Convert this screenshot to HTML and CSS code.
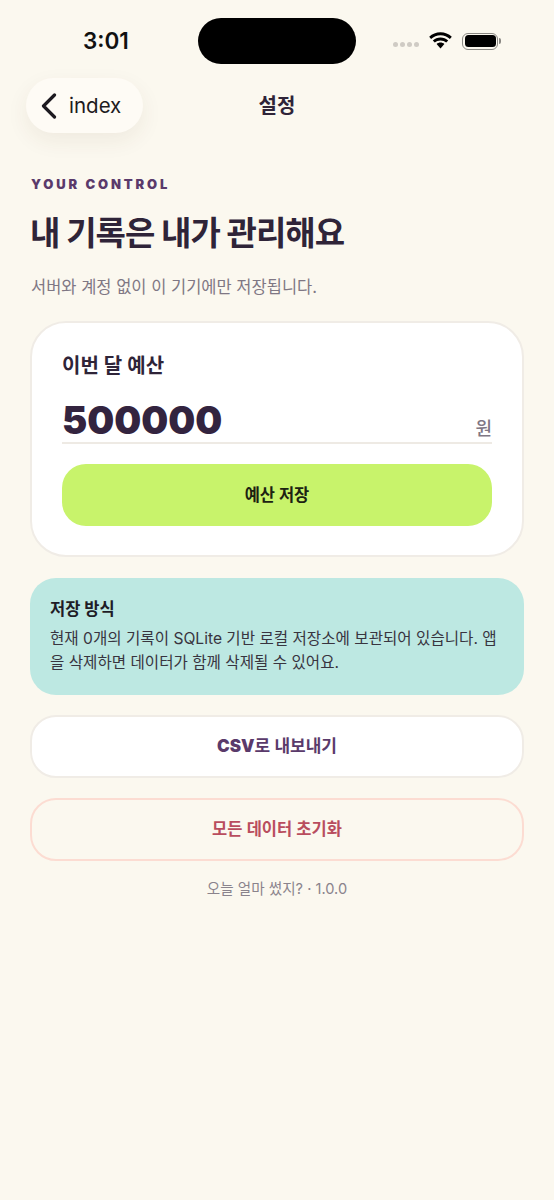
FILE: index.html
```html
<!DOCTYPE html>
<html lang="ko">
<head>
<meta charset="utf-8">
<title>설정</title>
<link rel="stylesheet" href="styles.css">
</head>
<body>
<div class="screen">
  <div class="status">
    <span class="time">3:01</span>
    <div class="island"></div>
    <div class="status-right">
      <div class="dots"><i></i><i></i><i></i><i></i></div>
      <svg class="wifi" width="25" height="18" viewBox="0 0 25 18"><path d="M12.5 3.2c3.6 0 6.900 1.400 9.400 3.700l1.900-2.100C20.800 2 16.800.3 12.500.3S4.200 2 1.200 4.800l1.900 2.100c2.500-2.300 5.800-3.700 9.400-3.700z"/><path d="M12.500 8.400c2.200 0 4.200.8 5.700 2.200l2-2.200c-2.100-1.900-4.800-3-7.700-3s-5.600 1.100-7.700 3l2 2.200c1.500-1.400 3.500-2.200 5.700-2.200z"/><path d="M12.500 10.600c-1.500 0-2.800.5-3.900 1.500l3.900 4.400 3.900-4.400c-1.100-1-2.400-1.500-3.900-1.500z"/></svg>
      <div class="battery"><div class="battery-fill"></div></div>
      <div class="battery-cap"></div>
    </div>
  </div>
  <header class="nav">
    <button class="back">
      <svg width="16" height="26" viewBox="0 0 16 26"><path d="M13.500 2 2.500 13l11 11" fill="none" stroke="#1d1a20" stroke-width="3.200" stroke-linecap="round" stroke-linejoin="round"/></svg>
      <span>index</span>
    </button>
    <h2 class="nav-title">설정</h2>
  </header>
  <main class="content">
    <p class="eyebrow">YOUR CONTROL</p>
    <h1 class="headline">내 기록은 내가 관리해요</h1>
    <p class="sub">서버와 계정 없이 이 기기에만 저장됩니다.</p>
    <section class="card">
      <div class="card-label">이번 달 예산</div>
      <div class="field"><span class="amount">500000</span><span class="unit">원</span></div>
      <button class="save">예산 저장</button>
    </section>
    <section class="info">
      <div class="info-title">저장 방식</div>
      <p class="info-text">현재 0개의 기록이 SQLite 기반 로컬 저장소에 보관되어 있습니다. 앱을 삭제하면 데이터가 함께 삭제될 수 있어요.</p>
    </section>
    <button class="action export"><b>CSV</b>로 내보내기</button>
    <button class="action reset">모든 데이터 초기화</button>
    <p class="foot">오늘 얼마 썼지? · 1.0.0</p>
  </main>
</div>
</body>
</html>
```
FILE: styles.css
```css
* { box-sizing: border-box; margin: 0; padding: 0; }
html, body { width: 554px; height: 1200px; overflow: hidden; }
body { background: #fbf8ef; font-family: Inter, "Noto Sans CJK KR", sans-serif; color: #2f2438; }
button { font-family: inherit; border: 0; background: none; display: block; }
.screen { position: relative; height: 1200px; }

.status { height: 78px; position: relative; }
.time { position: absolute; left: 83px; top: 27px; font-size: 22.500px; line-height: 28px; font-weight: 600; color: #111; }
.island { position: absolute; left: 198px; top: 18px; width: 158px; height: 46px; border-radius: 23px; background: #000; }
.status-right { position: absolute; left: 393px; top: 31px; height: 20px; display: flex; align-items: center; }
.dots { display: flex; gap: 2px; margin-top: 6px; }
.dots i { width: 5px; height: 5px; border-radius: 50%; background: #cfcbc4; display: block; }
.wifi { margin-left: 9px; margin-top: -1px; fill: #000; }
.battery { margin-left: 9px; width: 36px; height: 17px; border: 1.500px solid #8a8883; border-radius: 6px; padding: 1.500px; }
.battery-fill { width: 100%; height: 100%; background: #000; border-radius: 3.500px; }
.battery-cap { width: 2px; height: 6px; margin-left: 1px; background: #8a8883; border-radius: 0 2px 2px 0; }

.nav { height: 55px; position: relative; display: flex; justify-content: center; align-items: center; }
.back { position: absolute; left: 26px; top: 0; width: 117px; height: 55px; border-radius: 28px; background: #fefbf5; box-shadow: 0 8px 22px rgba(80, 60, 30, .07); display: flex; align-items: center; padding-left: 15px; gap: 12px; font-size: 20.500px; color: #1d1a20; }
.nav-title { font-size: 20px; line-height: 28px; font-weight: 700; color: #2f2438; }

.content { padding: 0 30px; }
.eyebrow { margin-top: 43px; font-size: 13px; line-height: 16px; font-weight: 900; letter-spacing: 2.850px; color: #5a3a6b; padding-left: 1px; }
.headline { margin-top: 20px; font-size: 33px; line-height: 42px; font-weight: 700; letter-spacing: -1px; color: #2f2438; }
.sub { margin-top: 21px; font-size: 16.500px; line-height: 24px; color: #7f7784; padding-left: 1px; }

.card { margin-top: 22px; width: 494px; height: 236px; background: #fff; border: 2px solid #f0ece6; border-radius: 36px; padding: 29px 30px 0; }
.card-label { font-size: 20px; line-height: 28px; font-weight: 600; color: #2f2438; }
.field { margin-top: 10px; height: 54px; border-bottom: 2px solid #eeeae4; display: flex; justify-content: space-between; align-items: flex-end; }
.amount { font-size: 38px; line-height: 46px; font-weight: 900; color: #33243f; margin-bottom: -1px; }
.unit { font-size: 18px; line-height: 26px; font-weight: 500; color: #7f7784; margin-bottom: 0; }
.save { margin-top: 20px; width: 100%; height: 62px; padding-bottom: 3px; border-radius: 24px; background: #c8f36b; font-size: 16.500px; font-weight: 700; color: #1c2212; }

.info { margin-top: 21px; width: 494px; height: 117px; background: #bde8e2; border-radius: 26px; padding: 19px 20px 0; }
.info-title { font-size: 16.500px; line-height: 24px; font-weight: 700; color: #1f1c26; }
.info-text { margin-top: 6px; font-size: 15.600px; line-height: 24px; color: #38343f; }

.action { width: 494px; height: 63px; border-radius: 26px; font-size: 17px; font-weight: 600; }
.export { margin-top: 20px; padding-bottom: 4px; background: #fff; border: 2px solid #f0ece6; color: #5a3a6b; }
.export b { font-weight: 900; }
.reset { margin-top: 20px; padding-bottom: 4px; background: transparent; border: 2px solid #fcdcd2; color: #b94d5e; font-size: 16.500px; }
.foot { margin-top: 18px; text-align: center; font-size: 14.600px; line-height: 20px; color: #8a838c; }
```
